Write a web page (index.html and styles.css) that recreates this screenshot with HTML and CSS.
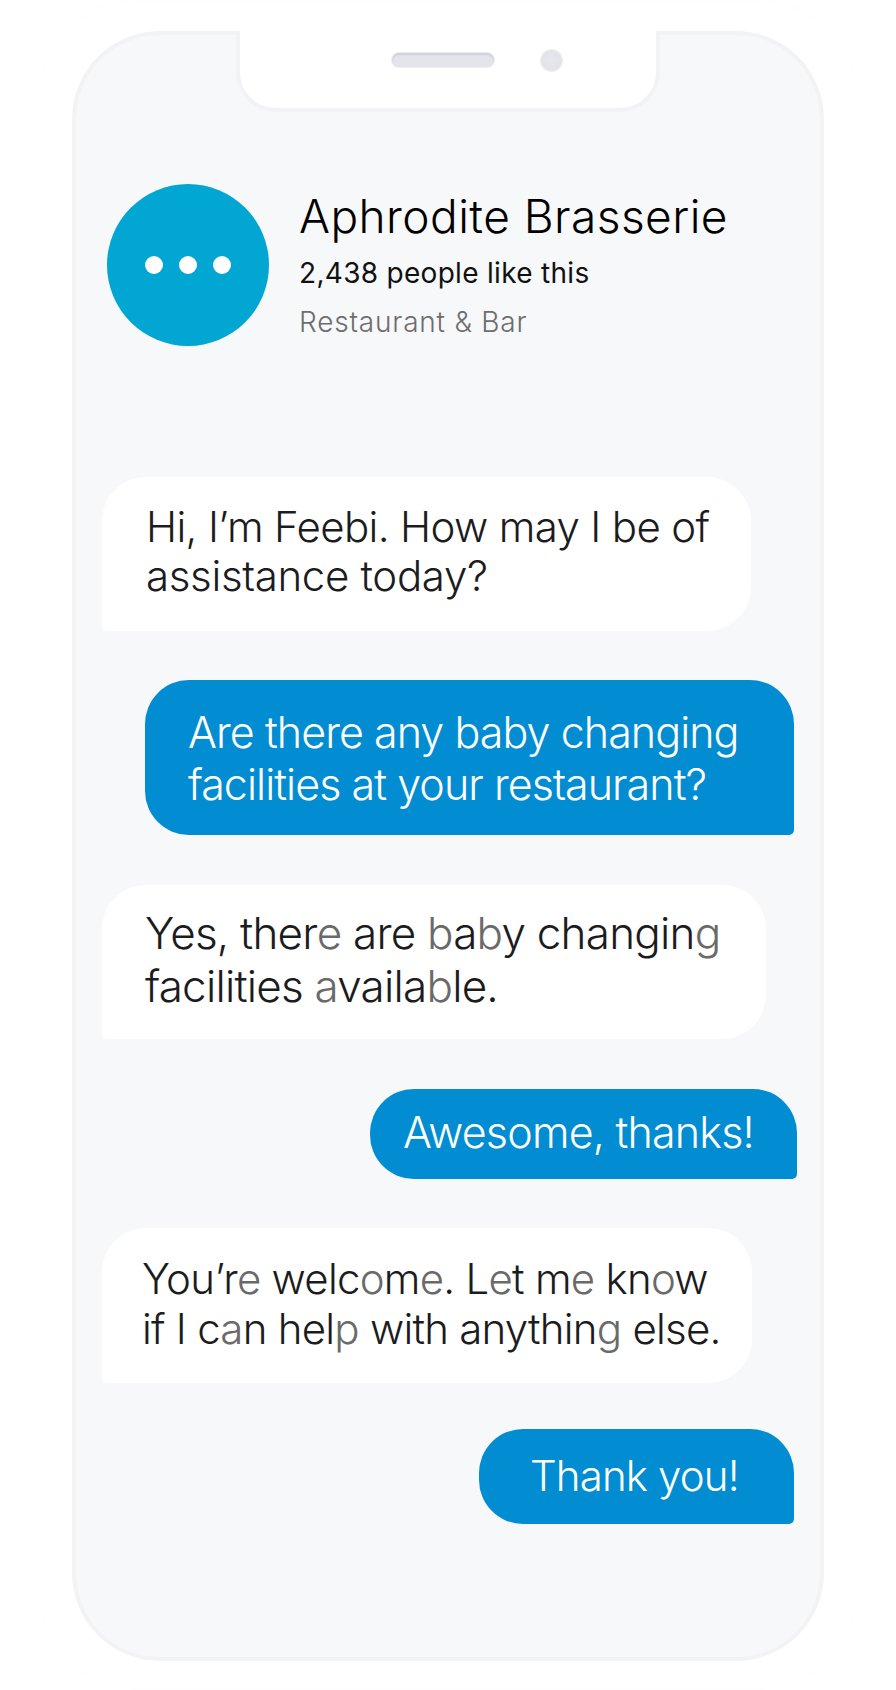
FILE: index.html
```html
<!DOCTYPE html>
<html lang="en">
<head>
	<title>Aphrodite Brasserie chat</title>
	<meta charset="utf-8">
	<meta name="viewport" content="initial-scale=1.0">
	<link rel="stylesheet" href="styles.css">
</head>
<body>

	<div class="shell">
		<main class="phone">
			<div class="notch">
				<span class="speaker"></span>
				<span class="camera"></span>
			</div>

			<header class="profile">
				<div class="avatar">
					<span class="dot"></span>
					<span class="dot"></span>
					<span class="dot"></span>
				</div>
				<div class="info">
					<h1 class="name">Aphrodite Brasserie</h1>
					<p class="likes">2,438 people like this</p>
					<p class="category">Restaurant &amp; Bar</p>
				</div>
			</header>

			<section class="chat">
				<div class="bubble bot msg-1">Hi, I’m Feebi. How may I be of<br><span class="wide">assistance today?</span></div>
				<div class="bubble user msg-2">Are there any baby changing<br>facilities at your restaurant?</div>
				<div class="bubble bot msg-3">Yes, ther<span class="fade">e</span> are <span class="fade">b</span>a<span class="fade">b</span>y changin<span class="fade">g</span><br>facilities <span class="fade">a</span>vaila<span class="fade">b</span>le.</div>
				<div class="bubble user msg-4">Awesome, thanks!</div>
				<div class="bubble bot msg-5">You’r<span class="fade">e</span> welc<span class="fade">o</span>m<span class="fade">e</span>. L<span class="fade">e</span>t m<span class="fade">e</span> kn<span class="fade">o</span>w<br>if I c<span class="fade">a</span>n hel<span class="fade">p</span> with anythin<span class="fade">g</span> else.</div>
				<div class="bubble user msg-6">Thank you!</div>
			</section>
		</main>
	</div>

</body>
</html>
```

FILE: styles.css
```css
* {
	box-sizing: border-box;
}

body, html {
	margin: 0;
	padding: 0;
	background: #fff;
	font-family: Inter, "Liberation Sans", sans-serif;
}

.shell {
	width: 820px;
	height: 1690px;
	margin-left: 38px;
	padding: 30px 33px 0;
	border: 1px solid #fdfdfd;
	border-radius: 100px;
}

.phone {
	position: relative;
	width: 752px;
	height: 1630px;
	background: #f7f8fa;
	border: 4px solid #f2f3f5;
	border-radius: 88px;
	padding: 0 26px;
}

.notch {
	position: absolute;
	top: -4px;
	left: 160px;
	width: 424px;
	height: 81px;
	background: #fff;
	border: 4px solid #f2f3f5;
	border-top: none;
	border-radius: 0 0 40px 40px;
	display: flex;
	align-items: center;
	justify-content: center;
	gap: 47px;
	padding: 0 0 19px 57px;
}

.speaker {
	width: 102px;
	height: 14px;
	border-radius: 7px;
	background: #e3e5ea;
	box-shadow: inset 0 2px 2px #cdd0d9, 0 0 0 1px #eceef1;
}

.camera {
	width: 21px;
	height: 21px;
	border-radius: 50%;
	background: radial-gradient(circle, #e6e8ec, #dfe1e7);
	box-shadow: 0 0 0 1px #eceef1;
}

.profile {
	display: flex;
	align-items: center;
	gap: 30px;
	padding: 149px 0 0 5px;
}

.avatar {
	flex: none;
	width: 162px;
	height: 162px;
	border-radius: 50%;
	background: #02a6d3;
	display: flex;
	align-items: center;
	justify-content: center;
	gap: 16px;
}

.dot {
	width: 18px;
	height: 18px;
	border-radius: 50%;
	background: #fff;
}

.info {
	padding-bottom: 2px;
}

.name {
	margin: 0;
	font-size: 46px;
	line-height: 52px;
	font-weight: 300;
	letter-spacing: .45px;
	color: #000;
}

.likes {
	margin: 14px 0 0;
	font-size: 28px;
	line-height: 34px;
	font-weight: 400;
	letter-spacing: .3px;
	color: #111;
}

.category {
	margin: 15px 0 0;
	font-size: 28px;
	line-height: 34px;
	font-weight: 300;
	letter-spacing: .8px;
	color: #6d6d6d;
}

.chat {
	display: flex;
	flex-direction: column;
	padding-top: 131px;
}

.bubble {
	font-size: 42px;
	font-weight: 350;
	line-height: 50px;
	letter-spacing: -.65px;
}

.bot {
	align-self: flex-start;
	background: #fff;
	color: #1c1c1e;
	border-radius: 44px 44px 44px 5px;
}

.user {
	align-self: flex-end;
	background: #028dd3;
	color: #fff;
	border-radius: 44px 44px 5px 44px;
}

.fade {
	color: #6a6a6a;
}

.wide {
	letter-spacing: -.33px;
}

.msg-1 {
	width: 649px;
	height: 154px;
	padding: 25px 0 0 44px;
	line-height: 49px;
}

.msg-2 {
	width: 649px;
	height: 155px;
	margin-top: 49px;
	padding: 26px 0 0 43px;
	font-size: 43px;
	line-height: 52px;
	letter-spacing: -.95px;
}

.msg-3 {
	width: 664px;
	height: 154px;
	margin-top: 50px;
	padding: 22px 0 0 43px;
	font-size: 44px;
	line-height: 53px;
	letter-spacing: -.77px;
}

.msg-4 {
	width: 427px;
	height: 90px;
	margin: 50px -3px 0 0;
	padding: 18px 0 0 33px;
	font-size: 43px;
	letter-spacing: -.8px;
}

.msg-5 {
	width: 650px;
	height: 155px;
	margin-top: 49px;
	padding: 26px 0 0 40px;
	letter-spacing: -.75px;
}

.msg-6 {
	width: 315px;
	height: 95px;
	margin-top: 46px;
	padding: 22px 0 0 51px;
	letter-spacing: -.85px;
}
```
